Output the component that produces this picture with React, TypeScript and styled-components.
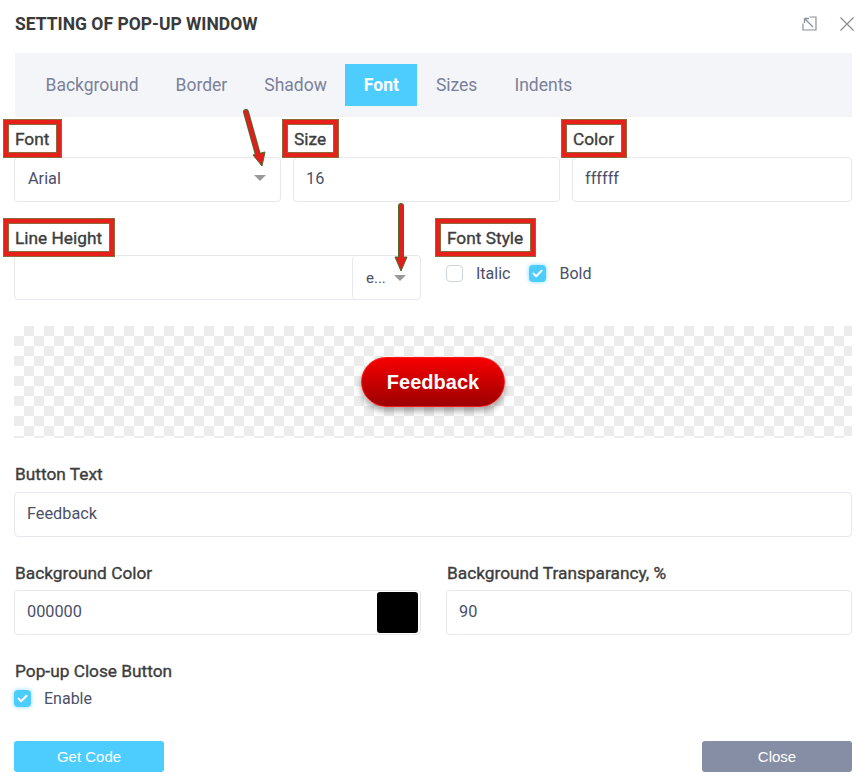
import { styled, createGlobalStyle } from 'styled-components'

const GlobalStyle = createGlobalStyle`
  html, body {
    margin: 0;
    padding: 0;
    background: #ffffff;
  }
  body {
    font-family: Roboto, "Noto Sans", "Liberation Sans", sans-serif;
    color: #3d3d3d;
  }
`

const tabs = ['Background', 'Border', 'Shadow', 'Font', 'Sizes', 'Indents']

const Check = () => (
  <svg width="11" height="9" viewBox="0 0 11 9">
    <path d="M1.5 4.6 L4.2 7.2 L9.5 1.8" fill="none" stroke="#fff" strokeWidth="2" strokeLinecap="round" strokeLinejoin="round" />
  </svg>
)

export default function App() {
  return (
    <>
      <GlobalStyle />
      <Page>
        <Header>
          <Title>SETTING OF POP-UP WINDOW</Title>
          <HeaderIcons>
            <IconBtn aria-label="expand">
              <svg width="15" height="15" viewBox="0 0 15 15">
                <path d="M1 7.5 V14 H14 V1 H7.5" fill="none" stroke="#8a8f99" strokeWidth="1.2" />
                <path d="M2.5 2.5 L11 11 M2.5 2.5 H7 M2.5 2.5 V7" fill="none" stroke="#8a8f99" strokeWidth="1.3" />
              </svg>
            </IconBtn>
            <IconBtn aria-label="close">
              <svg width="16" height="16" viewBox="0 0 16 16">
                <path d="M1.5 1.5 L14.5 14.5 M14.5 1.5 L1.5 14.5" stroke="#8a8f99" strokeWidth="1.3" />
              </svg>
            </IconBtn>
          </HeaderIcons>
        </Header>

        <TabBar>
          {tabs.map((t) => (
            <Tab key={t} $active={t === 'Font'}>{t}</Tab>
          ))}
        </TabBar>

        <Body>
          <TopGrid>
            <Field>
              <Label><Marked>Font</Marked></Label>
              <Select>
                <span>Arial</span>
                <Caret />
              </Select>
            </Field>
            <Field>
              <Label><Marked>Size</Marked></Label>
              <Input>16</Input>
            </Field>
            <Field>
              <Label><Marked>Color</Marked></Label>
              <Input>ffffff</Input>
            </Field>
          </TopGrid>

          <TwoGrid>
            <Field>
              <Label $gap={7}><Marked>Line Height</Marked></Label>
              <Input $flush>
                <Grow />
                <Unit>
                  <span>e...</span>
                  <Caret />
                </Unit>
              </Input>
            </Field>
            <Field>
              <Label $gap={7}><Marked>Font Style</Marked></Label>
              <Checks>
                <CheckItem>
                  <Box $on={false} />
                  Italic
                </CheckItem>
                <CheckItem>
                  <Box $on><Check /></Box>
                  Bold
                </CheckItem>
              </Checks>
            </Field>
          </TwoGrid>

          <Preview>
            <FeedbackButton>Feedback</FeedbackButton>
          </Preview>

          <Field>
            <Label>Button Text</Label>
            <Input>Feedback</Input>
          </Field>

          <TwoGrid>
            <Field>
              <Label $gap={7}>Background Color</Label>
              <Input $swatch>
                <Grow>000000</Grow>
                <Swatch $color="#000000" />
              </Input>
            </Field>
            <Field>
              <Label $gap={7}>Background Transparancy, %</Label>
              <Input>90</Input>
            </Field>
          </TwoGrid>

          <Field>
            <Label $gap={9}>Pop-up Close Button</Label>
            <CheckItem>
              <Box $on><Check /></Box>
              Enable
            </CheckItem>
          </Field>
        </Body>

        <Footer>
          <ActionButton $color="#4ccdfd">Get Code</ActionButton>
          <ActionButton $color="#858ea4">Close</ActionButton>
        </Footer>

        {/* red annotation arrows drawn over the screenshot */}
        <Arrows width="862" height="300" viewBox="0 0 862 300">
          <g stroke="#4a6a2a" strokeWidth="6" strokeLinecap="round" fill="#4a6a2a">
            <path d="M246 112 L258 155" />
            <path d="M401 206 L401 258" />
          </g>
          <polygon points="253,155 265,152 262,166" fill="#e31c1c" stroke="#4a6a2a" strokeWidth="1" />
          <polygon points="395,257 407,257 401,271" fill="#e31c1c" stroke="#4a6a2a" strokeWidth="1" />
          <g stroke="#e31c1c" strokeWidth="4" strokeLinecap="round">
            <path d="M246 112 L258 155" />
            <path d="M401 206 L401 258" />
          </g>
        </Arrows>
      </Page>
    </>
  )
}

const Page = styled.div`
  position: relative;
  width: 862px;
  height: 781px;
  box-sizing: border-box;
  padding: 0 10px 0 14px;
  display: flex;
  flex-direction: column;
`

const Header = styled.div`
  height: 47px;
  display: flex;
  align-items: center;
  justify-content: space-between;
  padding-left: 1px;
`

const Title = styled.h1`
  margin: 0;
  font-size: 17.5px;
  font-weight: 700;
  color: #3a3a3a;
`

const HeaderIcons = styled.div`
  display: flex;
  align-items: center;
  gap: 22px;
  margin-right: -3px;
`

const IconBtn = styled.span`
  display: flex;
  align-items: center;
  justify-content: center;
`

const TabBar = styled.div`
  margin-top: 6px;
  margin-left: 1px;
  height: 64px;
  background: #f4f5f9;
  display: flex;
  align-items: center;
  padding-left: 12px;
`

const Tab = styled.div<{ $active?: boolean }>`
  height: 42px;
  display: flex;
  align-items: center;
  padding: 0 18.5px;
  font-size: 17.5px;
  color: ${(p) => (p.$active ? '#ffffff' : '#7a8199')};
  font-weight: ${(p) => (p.$active ? 700 : 400)};
  background: ${(p) => (p.$active ? '#4ccdfd' : 'transparent')};
`

const Body = styled.div`
  margin-top: 12px;
  display: flex;
  flex-direction: column;
  gap: 26px;
`

const TopGrid = styled.div`
  display: grid;
  grid-template-columns: 267px 267px 1fr;
  column-gap: 12px;
`

const TwoGrid = styled.div`
  display: grid;
  grid-template-columns: 407px 1fr;
  column-gap: 25px;
`

const Field = styled.div`
  display: flex;
  flex-direction: column;
`

const Label = styled.div<{ $gap?: number }>`
  height: 20px;
  line-height: 20px;
  font-size: 17.3px;
  font-weight: 400;
  -webkit-text-stroke: 0.35px #3d3d3d;
  color: #3d3d3d;
  margin-bottom: ${(p) => p.$gap ?? 8}px;
  margin-left: 1px;
`

const Marked = styled.span`
  position: relative;
  display: inline-block;
  &::after {
    content: '';
    position: absolute;
    top: -9px;
    bottom: -8px;
    left: -11px;
    right: -12px;
    border: 4px solid #e8201b;
    box-shadow: 0 0 0 1px #8c6a3c, inset 0 0 0 1px #8c6a3c;
    pointer-events: none;
  }
`

const Input = styled.div<{ $flush?: boolean; $swatch?: boolean }>`
  height: 45px;
  box-sizing: border-box;
  border: 1px solid #e6e8ee;
  border-radius: 4px;
  display: flex;
  align-items: center;
  padding: ${(p) => (p.$flush ? '0' : p.$swatch ? '0 2px 3px 12px' : '0 12px 3px')};
  font-size: 16.3px;
  color: #4a5068;
  background: #fff;
`

const Select = styled(Input)`
  justify-content: space-between;
  padding: 0 14px 3px 13px;
`

const Grow = styled.div`
  flex: 1;
`

const Unit = styled.div`
  width: 68px;
  height: 100%;
  box-sizing: border-box;
  border-left: 1px solid #e6e8ee;
  border-radius: 4px;
  display: flex;
  align-items: center;
  justify-content: space-between;
  padding: 0 14px 0 13px;
  font-size: 15px;
  color: #4a5068;
`

const Caret = styled.span`
  width: 0;
  height: 0;
  border-left: 6px solid transparent;
  border-right: 6px solid transparent;
  border-top: 6px solid #999999;
`

const Swatch = styled.div<{ $color: string }>`
  width: 41px;
  height: 41px;
  margin-bottom: -3px;
  border-radius: 3px;
  background: ${(p) => p.$color};
`

const Checks = styled.div`
  display: flex;
  align-items: center;
  gap: 19px;
  margin-top: 10px;
`

const CheckItem = styled.label`
  display: flex;
  align-items: center;
  gap: 13px;
  font-size: 16px;
  color: #4a5068;
  height: 17px;
`

const Box = styled.span<{ $on: boolean }>`
  width: 17px;
  height: 17px;
  box-sizing: border-box;
  border-radius: 4px;
  display: flex;
  align-items: center;
  justify-content: center;
  background: ${(p) => (p.$on ? '#4ccdfd' : '#ffffff')};
  border: ${(p) => (p.$on ? 'none' : '1px solid #cfd4dc')};
  box-shadow: ${(p) => (p.$on ? '0 0 4px rgba(76, 205, 253, 0.7)' : 'none')};
`

const Preview = styled.div`
  height: 112px;
  display: flex;
  align-items: center;
  justify-content: center;
  background-color: #ffffff;
  background-image: conic-gradient(#ececec 25%, #ffffff 0 50%, #ececec 0 75%, #ffffff 0);
  background-size: 20px 20px;
`

const FeedbackButton = styled.div`
  width: 144px;
  height: 50px;
  box-sizing: border-box;
  border-radius: 25px;
  border: 1px solid #ff1a1a;
  background: linear-gradient(to bottom, #f70000, #9c0000);
  box-shadow: 0 4px 6px rgba(0, 0, 0, 0.35);
  display: flex;
  align-items: center;
  justify-content: center;
  color: #ffffff;
  font-family: "Liberation Sans", Arial, sans-serif;
  font-weight: 700;
  font-size: 20px;
`

const Footer = styled.div`
  margin-top: 34px;
  display: flex;
  justify-content: space-between;
`

const ActionButton = styled.button<{ $color: string }>`
  width: 150px;
  height: 31px;
  border: none;
  border-radius: 3px;
  background: ${(p) => p.$color};
  color: #ffffff;
  font-family: "Liberation Sans", Arial, sans-serif;
  font-size: 15px;
  padding: 0;
`

const Arrows = styled.svg`
  position: absolute;
  left: 0;
  top: 0;
  pointer-events: none;
`
